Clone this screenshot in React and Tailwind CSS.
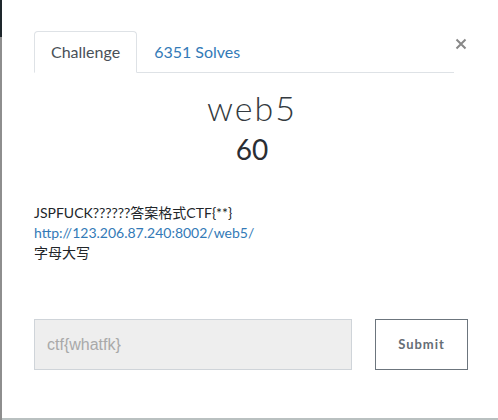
import React from 'react'

export default function App() {
  return (
    <div className="flex h-[420px] w-[498px] overflow-hidden bg-white font-['Lato','Noto_Sans_CJK_SC',sans-serif]">
      {/* backdrop edge */}
      <div className="flex w-[2px] flex-col">
        <div className="h-[37px] bg-[#1e272c]"></div>
        <div className="flex-1 bg-[#8e8e8e]"></div>
      </div>
      <div className="flex flex-1 flex-col border-b-2 border-[#b9c0c0] pl-[32px]">
        <div className="mt-[31px] flex">
          <div className="flex w-[420px] border-b border-[#dee2e6]">
            <div className="-mb-px flex h-[42px] items-center rounded-t border border-b-white border-[#dee2e6] bg-white px-[16px] text-[16px] text-[#495057]">
              Challenge
            </div>
            <div className="flex h-[41px] items-center px-[17px] text-[16px] text-[#337ab7]">
              6351 Solves
            </div>
          </div>
          <div className="-ml-[3px] mt-[3px] flex h-[20px] w-[20px] items-center justify-center">
            <svg width="12" height="12" viewBox="0 0 12 12">
              <path d="M1.5 1.5 L10.5 10.5 M10.5 1.5 L1.5 10.5" stroke="#888" strokeWidth="2" />
            </svg>
          </div>
        </div>

        <div className="w-[436px] pt-[15px] text-center">
          <h2 className="text-[34px] font-light leading-[40px] text-[#343a40] tracking-[2px]">web5</h2>
          <h3 className="mt-[4px] text-[28px] leading-[34px] text-[#2a2e33]">60</h3>
        </div>

        <div className="mt-[37px] text-[14px] leading-[20px] text-[#212529]">
          <p>JSPFUCK??????答案格式CTF{'{**}'}</p>
          <p className="text-[#337ab7]">http://123.206.87.240:8002/web5/</p>
          <p>字母大写</p>
        </div>

        <div className="mt-[56px] flex items-center">
          <input
            type="text"
            placeholder="ctf{whatfk}"
            className="h-[51px] w-[318px] border border-[#cfd4d9] bg-[#eeeeee] px-[12px] font-['Liberation_Sans',sans-serif] text-[16px] placeholder:text-[#a9a9a9]"
          />
          <button className="ml-[23px] h-[51px] w-[93px] border border-[#6c757d] bg-white text-[13px] font-bold tracking-[1px] text-[#656d75]">
            Submit
          </button>
        </div>
      </div>
    </div>
  )
}
